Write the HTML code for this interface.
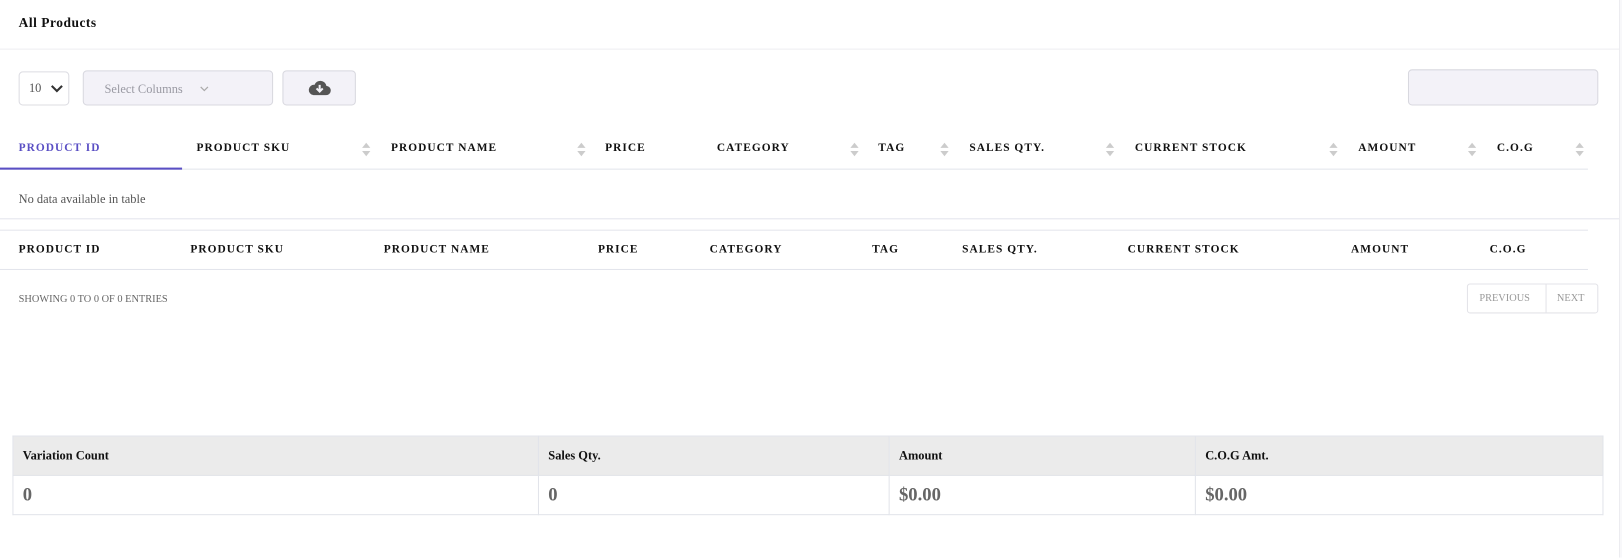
<!DOCTYPE html><html><head><style>
html,body{margin:0;width:1622px;height:539px;background:#fff;overflow:hidden}
#w{position:absolute;left:0;top:0;width:1568px;height:521px;transform:scale(1.0345);transform-origin:0 0;font-family:"Liberation Serif",serif;color:#111}
.a{position:absolute;white-space:nowrap}
.h{font-size:11px;font-weight:bold;letter-spacing:1px;top:137px}
.h2{font-size:11px;font-weight:bold;letter-spacing:1px;top:235px}
.s{position:absolute;top:138px;width:8px;height:14px}
.s:before{content:"";position:absolute;left:0;top:0;border:4px solid transparent;border-bottom:5px solid #ccc;border-top:0}
.s:after{content:"";position:absolute;left:0;top:8px;border:4px solid transparent;border-top:5px solid #ccc;border-bottom:0}
.ln{position:absolute;height:1px;background:#e3e5ec}
table{position:absolute;left:12px;top:421px;width:1538px;border-collapse:collapse}
td{border:1px solid #e2e4ea;padding:0 9px;font-size:12px;font-weight:bold}
</style></head><body><div id="w">
<div class="a" style="left:1565px;top:0;width:10px;height:539px;background:#f8f8fa;border-left:1px solid #ececf0"></div>
<div class="a" style="left:18px;top:14px;font-size:13px;font-weight:bold;letter-spacing:.5px">All Products</div>
<div class="ln" style="left:0;top:47px;width:1565px;background:#eeeef2"></div>
<div class="a" style="left:18px;top:69px;width:49px;height:33px;border:1px solid #dcdce2;border-radius:4px;box-sizing:border-box"><span class="a" style="left:9px;top:8px;font-size:12px;color:#555">10</span><svg class="a" style="left:30px;top:12px" width="12" height="8"><path d="M1 1l5 5 5-5" stroke="#333" stroke-width="2" fill="none"/></svg></div>
<div class="a" style="left:80px;top:68px;width:184px;height:34px;background:#f3f2f8;border:1px solid #d8d8df;border-radius:4px;box-sizing:border-box"><span class="a" style="left:20px;top:10px;font-size:12px;color:#9a9aa3">Select Columns</span><svg class="a" style="left:112px;top:14px" width="9" height="6"><path d="M1 1l3.5 3.5 3.5-3.5" stroke="#aaa" stroke-width="1.2" fill="none"/></svg></div>
<div class="a" style="left:273px;top:68px;width:71px;height:34px;background:#f3f2f8;border:1px solid #d8d8df;border-radius:4px;box-sizing:border-box"><svg class="a" style="left:24px;top:8px" width="22" height="16" viewBox="0 0 22 16"><path d="M5 15h12a4.5 4.5 0 0 0 .5-9A6 6 0 0 0 6 5a5 5 0 0 0-1 10z" fill="#555"/><path d="M11 5v6M8 8.5l3 3 3-3" stroke="#f3f2f8" stroke-width="2" fill="none"/></svg></div>
<div class="a" style="left:1361px;top:67px;width:184px;height:35px;background:#f3f2f8;border:1px solid #d8d8df;border-radius:4px;box-sizing:border-box"></div>
<div class="a h" style="left:18px;color:#5a4fc4">PRODUCT ID</div>
<div class="a h" style="left:190px">PRODUCT SKU</div>
<div class="a h" style="left:378px">PRODUCT NAME</div>
<div class="a h" style="left:585px">PRICE</div>
<div class="a h" style="left:693px">CATEGORY</div>
<div class="a h" style="left:849px">TAG</div>
<div class="a h" style="left:937px">SALES QTY.</div>
<div class="a h" style="left:1097px">CURRENT STOCK</div>
<div class="a h" style="left:1313px">AMOUNT</div>
<div class="a h" style="left:1447px">C.O.G</div>
<div class="s" style="left:350px"></div><div class="s" style="left:558px"></div><div class="s" style="left:822px"></div><div class="s" style="left:909px"></div><div class="s" style="left:1069px"></div><div class="s" style="left:1285px"></div><div class="s" style="left:1419px"></div><div class="s" style="left:1523px"></div>
<div class="ln" style="left:0;top:163px;width:1535px"></div>
<div class="a" style="left:0;top:162px;width:176px;height:2px;background:#5a4fc4"></div>
<div class="a" style="left:18px;top:185px;font-size:12px;color:#555">No data available in table</div>
<div class="ln" style="left:0;top:211px;width:1565px"></div>
<div class="ln" style="left:0;top:222px;width:1535px"></div>
<div class="a h2" style="left:18px">PRODUCT ID</div>
<div class="a h2" style="left:184px">PRODUCT SKU</div>
<div class="a h2" style="left:371px">PRODUCT NAME</div>
<div class="a h2" style="left:578px">PRICE</div>
<div class="a h2" style="left:686px">CATEGORY</div>
<div class="a h2" style="left:843px">TAG</div>
<div class="a h2" style="left:930px">SALES QTY.</div>
<div class="a h2" style="left:1090px">CURRENT STOCK</div>
<div class="a h2" style="left:1306px">AMOUNT</div>
<div class="a h2" style="left:1440px">C.O.G</div>
<div class="ln" style="left:0;top:260px;width:1535px"></div>
<div class="a" style="left:18px;top:284px;font-size:10px;color:#666">SHOWING 0 TO 0 OF 0 ENTRIES</div>
<div class="a" style="left:1418px;top:274px;width:127px;height:29px;border:1px solid #e3e3e8;border-radius:3px;box-sizing:border-box"><div class="a" style="left:75px;top:0;width:1px;height:27px;background:#e3e3e8"></div><span class="a" style="left:11px;top:8px;font-size:10px;color:#999">PREVIOUS</span><span class="a" style="left:86px;top:8px;font-size:10px;color:#999">NEXT</span></div>
<table><tr style="background:#ebebeb;height:38px"><td style="width:489px">Variation Count</td><td style="width:320px">Sales Qty.</td><td style="width:277px">Amount</td><td>C.O.G Amt.</td></tr>
<tr style="height:38px"><td style="font-size:18px;color:#666">0</td><td style="font-size:18px;color:#666">0</td><td style="font-size:18px;color:#666">$0.00</td><td style="font-size:18px;color:#666">$0.00</td></tr></table>
</div></body></html>
